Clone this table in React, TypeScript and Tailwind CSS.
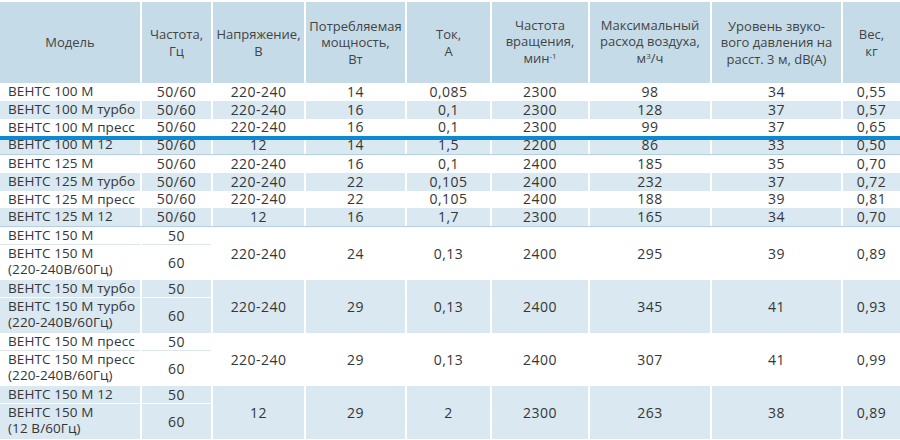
const cols = "grid grid-cols-[140px_69px_91px_99px_83px_96px_120px_129px_57px] gap-x-[2px]";

const rows = [
  ["ВЕНТС 100 М", "50/60", "220-240", "14", "0,085", "2300", "98", "34", "0,55"],
  ["ВЕНТС 100 М турбо", "50/60", "220-240", "16", "0,1", "2300", "128", "37", "0,57"],
  ["ВЕНТС 100 М пресс", "50/60", "220-240", "16", "0,1", "2300", "99", "37", "0,65"],
  ["ВЕНТС 100 М 12", "50/60", "12", "14", "1,5", "2200", "86", "33", "0,50"],
  ["ВЕНТС 125 М", "50/60", "220-240", "16", "0,1", "2400", "185", "35", "0,70"],
  ["ВЕНТС 125 М турбо", "50/60", "220-240", "22", "0,105", "2400", "232", "37", "0,72"],
  ["ВЕНТС 125 М пресс", "50/60", "220-240", "22", "0,105", "2400", "188", "39", "0,81"],
  ["ВЕНТС 125 М 12", "50/60", "12", "16", "1,7", "2300", "165", "34", "0,70"],
];

const groups = [
  { top: "ВЕНТС 150 М", name: "ВЕНТС 150 М", sub: "(220-240В/60Гц)", vals: ["220-240", "24", "0,13", "2400", "295", "39", "0,89"] },
  { top: "ВЕНТС 150 М турбо", name: "ВЕНТС 150 М турбо", sub: "(220-240В/60Гц)", vals: ["220-240", "29", "0,13", "2400", "345", "41", "0,93"] },
  { top: "ВЕНТС 150 М пресс", name: "ВЕНТС 150 М пресс", sub: "(220-240В/60Гц)", vals: ["220-240", "29", "0,13", "2400", "307", "41", "0,99"] },
  { top: "ВЕНТС 150 М 12", name: "ВЕНТС 150 М", sub: "(12 В/60Гц)", vals: ["12", "29", "2", "2300", "263", "38", "0,89"] },
];

const nameText = "text-[13.5px] tracking-[0.1px] whitespace-nowrap";
const numText = "text-[14px] tracking-[0.45px]";

function Header() {
  const heads = [
    <>Модель</>,
    <>Частота,<br />Гц</>,
    <>Напряжение,<br />В</>,
    <>Потребляемая<br />мощность,<br />Вт</>,
    <>Ток,<br />А</>,
    <>Частота<br />вращения,<br />мин<span className="relative -top-[4px] text-[8px]">-1</span></>,
    <>Максимальный<br />расход воздуха,<br />м<span className="relative -top-[4px] text-[8px]">3</span>/ч</>,
    <>Уровень звуко-<br />вого давления на<br />расст. 3 м, dB(A)</>,
    <>Вес,<br />кг</>,
  ];
  return (
    <div className={`${cols} mt-[2px]`}>
      {heads.map((h, i) => (
        <div
          key={i}
          className="h-[81px] bg-[#c5dbe8] flex items-center justify-center text-center text-[13px] leading-[16.5px] text-[#444]"
        >
          <div>{h}</div>
        </div>
      ))}
    </div>
  );
}

function Row({ data, blue }: { data: string[]; blue: boolean }) {
  return (
    <div className={cols}>
      {data.map((v, i) => (
        <div
          key={i}
          className={`h-[17.75px] flex items-center leading-none ${blue ? "bg-[#d9e8f1]" : "bg-white"} ${
            i === 0 ? `pl-[8px] ${nameText}` : `justify-center ${numText}`
          }`}
        >
          {v}
        </div>
      ))}
    </div>
  );
}

function Group({ g, blue }: { g: (typeof groups)[number]; blue: boolean }) {
  const bg = blue ? "bg-[#d9e8f1]" : "bg-white";
  const line = blue ? "border-white" : "border-[#dde8ee]";
  return (
    <div className={`${cols} grid-rows-[18px_35px]`}>
      <div className={`col-start-1 row-start-1 ${bg} border-b ${line} pl-[8px] flex items-center leading-none ${nameText}`}>
        {g.top}
      </div>
      <div className={`col-start-1 row-start-2 ${bg} pl-[8px] flex flex-col leading-[16px] ${nameText}`}>
        <span>{g.name}</span>
        <span>{g.sub}</span>
      </div>
      <div className={`col-start-2 row-start-1 ${bg} border-b ${line} flex items-center justify-center leading-none ${numText}`}>
        50
      </div>
      <div className={`col-start-2 row-start-2 ${bg} flex items-center justify-center ${numText}`}>60</div>
      {g.vals.map((v, i) => (
        <div key={i} className={`row-start-1 row-span-2 ${bg} flex items-center justify-center ${numText}`}>
          {v}
        </div>
      ))}
    </div>
  );
}

export default function App() {
  return (
    <div
      className="relative w-[900px] h-[440px] overflow-hidden bg-white text-[#363636]"
      style={{ fontFamily: '"Open Sans", "Noto Sans", sans-serif' }}
    >
      <Header />
      {rows.slice(0, 4).map((r, i) => (
        <Row key={i} data={r} blue={i % 2 === 1} />
      ))}
      <div className="h-px bg-[#b3cfe1]" />
      {rows.slice(4).map((r, i) => (
        <Row key={i} data={r} blue={i % 2 === 1} />
      ))}
      <div className="h-px bg-[#b3cfe1]" />
      {groups.map((g, i) => (
        <Group key={i} g={g} blue={i % 2 === 1} />
      ))}
      <div className="absolute left-0 right-0 top-[136px] h-[4px] bg-[#0a89d5]" />
    </div>
  );
}
